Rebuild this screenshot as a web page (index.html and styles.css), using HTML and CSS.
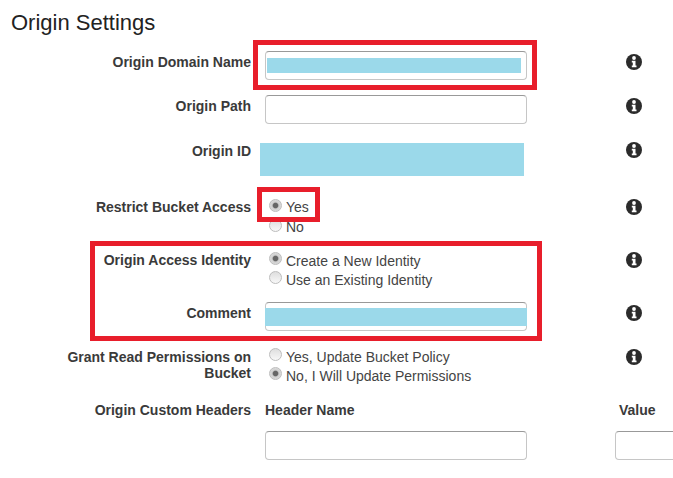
FILE: index.html
```html
<!DOCTYPE html>
<html lang="en">
<head>
    <meta charset="UTF-8">
    <title>Origin Settings</title>
    <link rel="stylesheet" href="styles.css">
</head>
<body>
    <svg class="defs" width="0" height="0">
        <symbol id="info" viewBox="0 0 16 16">
            <circle cx="8" cy="8" r="8" fill="#2b2b2b"/>
            <circle cx="8" cy="4" r="1.9" fill="#fff"/>
            <path d="M5.8 6.8h3.7v4.7h1v1.8H5.8v-1.8h1V8.6h-1z" fill="#fff"/>
        </symbol>
    </svg>

    <h1 class="title">Origin Settings</h1>

    <div class="form">
        <div class="row row-domain">
            <label class="label">Origin Domain Name</label>
            <div class="input"><div class="mask mask-domain"></div></div>
            <svg class="info"><use href="#info"/></svg>
        </div>

        <div class="row row-path">
            <label class="label">Origin Path</label>
            <div class="input"></div>
            <svg class="info"><use href="#info"/></svg>
        </div>

        <div class="row row-id">
            <label class="label">Origin ID</label>
            <div class="mask mask-id"></div>
            <svg class="info"><use href="#info"/></svg>
        </div>

        <div class="row row-restrict">
            <label class="label">Restrict Bucket Access</label>
            <div class="radios">
                <div class="radio"><span class="dot on"></span>Yes</div>
                <div class="radio"><span class="dot"></span>No</div>
            </div>
            <svg class="info"><use href="#info"/></svg>
        </div>

        <div class="row row-identity">
            <label class="label">Origin Access Identity</label>
            <div class="radios">
                <div class="radio"><span class="dot on"></span>Create a New Identity</div>
                <div class="radio"><span class="dot"></span>Use an Existing Identity</div>
            </div>
            <svg class="info"><use href="#info"/></svg>
        </div>

        <div class="row row-comment">
            <label class="label">Comment</label>
            <div class="input"><div class="mask mask-comment"></div></div>
            <svg class="info"><use href="#info"/></svg>
        </div>

        <div class="row row-grant">
            <label class="label">Grant Read Permissions on Bucket</label>
            <div class="radios">
                <div class="radio"><span class="dot"></span>Yes, Update Bucket Policy</div>
                <div class="radio"><span class="dot on"></span>No, I Will Update Permissions</div>
            </div>
            <svg class="info"><use href="#info"/></svg>
        </div>

        <div class="row row-headers">
            <label class="label">Origin Custom Headers</label>
            <div class="head">Header Name</div>
            <div class="head head-value">Value</div>
        </div>

        <div class="row row-inputs">
            <div></div>
            <div class="input"></div>
            <div class="input input-value"></div>
        </div>
    </div>

    <!-- red highlight boxes drawn over the form -->
    <div class="mark mark-domain"></div>
    <div class="mark mark-yes"></div>
    <div class="mark mark-identity"></div>
</body>
</html>
```

FILE: styles.css
```css
html,body{margin: 0; padding: 0; background: #fff; overflow: hidden}
body{position: relative; width: 673px; height: 478px; font-family: "Liberation Sans", Arial, sans-serif; color: #444}
.defs{position: absolute}

.title{margin: 0; padding: 11px 0 0 11px; font-size: 22px; line-height: 24px; font-weight: normal; color: #222}

.form{padding-top: 16px}
.row{display: grid; grid-template-columns: 251px 262px 146px; column-gap: 14px; align-items: start}
.row-domain{margin-bottom: 15px}
.row-path{margin-bottom: 19px}
.row-id{margin-bottom: 21px}
.row-restrict{margin-bottom: 14px}
.row-identity{margin-bottom: 13px}
.row-comment{margin-bottom: 16px}
.row-grant{margin-bottom: 17px}
.row-headers{margin-bottom: 13px}

.label{box-sizing: border-box; padding-left: 60px; font-size: 14px; line-height: 16px; font-weight: bold; text-align: right; color: #3a3a3a}
.row-domain .label, .row-path .label{padding-top: 3px}
.row-restrict .label{padding-top: 2px}
.row-identity .label{padding-top: 1px}
.row-comment .label{padding-top: 3px}
.row-grant .label{padding-top: 2px}

.input{box-sizing: border-box; height: 29px; border: 1px solid #c6c6c6; border-top-color: #999; border-radius: 4px; background: #fff; display: flex; align-items: center}
.mask{background: #9bd9ea}
.mask-domain{width: 254px; height: 15px; margin-left: 1px}
.mask-comment{flex: none; width: 262px; height: 18px; margin: 1px -1px 0}
.mask-id{width: 264px; height: 33px; margin-left: -5px}

.info{width: 16px; height: 16px; margin: 3px 0 0 85px}
.row-id .info{margin-top: -1px}
.row-restrict .info{margin-top: 2px}
.row-identity .info{margin-top: 1px}
.row-comment .info{margin-top: 3px}
.row-grant .info{margin-top: 2px}

.radios{font-size: 14px; color: #444}
.radio{display: flex; align-items: center; height: 19px; padding-left: 4px}
.row-restrict .radio{height: 20px}
.dot{box-sizing: border-box; flex: none; width: 13px; height: 13px; margin-right: 4px; margin-top: -4px; border: 1px solid #bdbdbd; border-radius: 50%; background: linear-gradient(#dedede, #f8f8f8)}
.dot.on{background: radial-gradient(circle, #666 0, #666 2.2px, #cfcfcf 3.4px, #e6e6e6 100%)}

.head{font-size: 14px; line-height: 16px; font-weight: bold; color: #3a3a3a}
.head-value{margin-left: 78px}
.input-value{margin-left: 74px; width: 72px}

.mark{position: absolute; box-sizing: border-box; border: 5px solid #e81e2b}
.mark-domain{left: 253px; top: 40px; width: 284px; height: 50px}
.mark-yes{left: 257px; top: 187px; width: 63px; height: 35px}
.mark-identity{left: 90px; top: 241px; width: 452px; height: 100px}
```
